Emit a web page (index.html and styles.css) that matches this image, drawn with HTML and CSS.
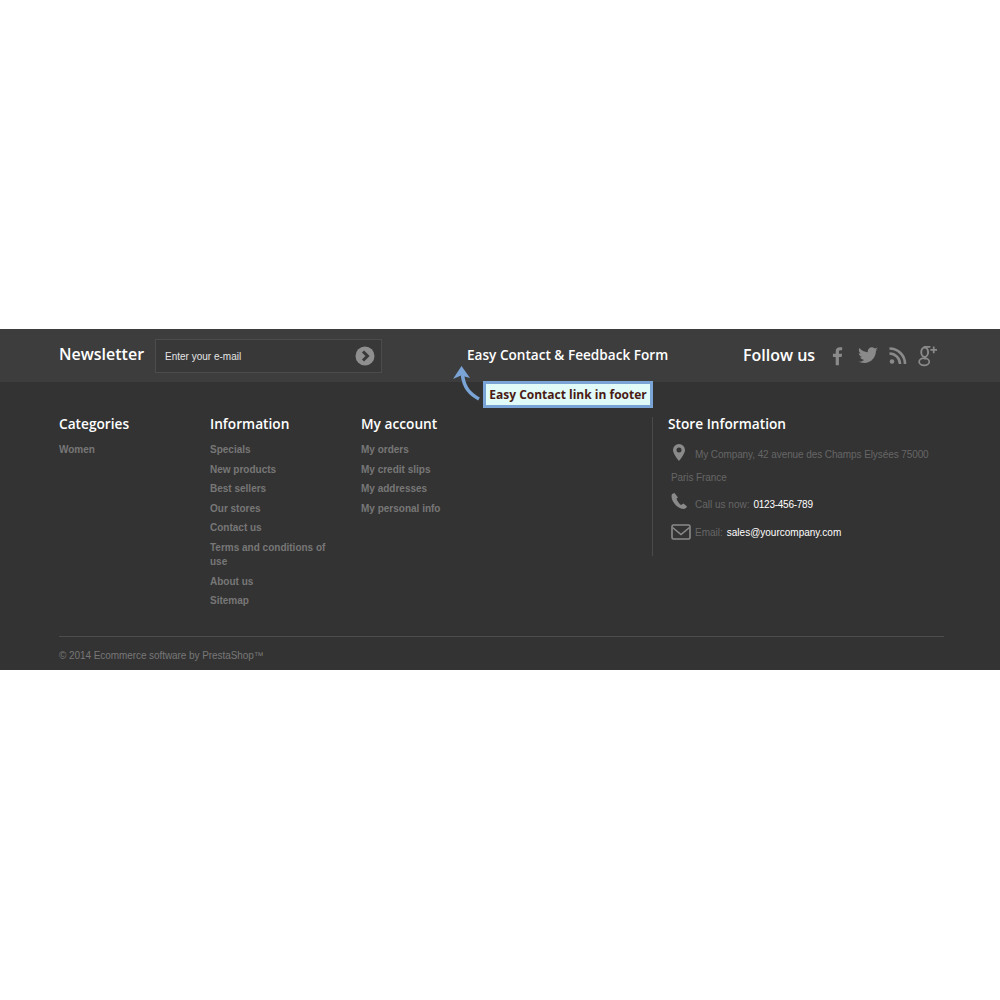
FILE: index.html
```html
<!DOCTYPE html>
<html lang="en">
<head>
    <meta charset="UTF-8">
    <title>Easy Contact link in footer</title>
    <link rel="stylesheet" href="styles.css">
</head>
<body>
    <footer class="footer">
        <div class="top-bar">
            <div class="newsletter">
                <h4 class="newsletter-title">Newsletter</h4>
                <div class="newsletter-box">
                    <span class="newsletter-text">Enter your e-mail</span>
                    <svg class="newsletter-go" width="20" height="20" viewBox="0 0 20 20">
                        <circle cx="10" cy="10" r="9.5" fill="#8f8f8f"/>
                        <path d="M8 5.500 12.500 10 8 14.500" fill="none" stroke="#3a3a3a" stroke-width="3"/>
                    </svg>
                </div>
            </div>
            <a class="easy-link">Easy Contact &amp; Feedback Form</a>
            <div class="follow">
                <h4 class="follow-title">Follow us</h4>
                <div class="follow-icons">
                    <svg class="icon-facebook" width="12" height="20" viewBox="0 0 13 20"><path fill="#8a8a8a" d="M4 20V11H1V7.500h3V5c0-3 1.800-4.500 4.400-4.500 1.200 0 2.200.1 2.600.1v3.200H9.200C7.800 3.800 7.500 4.500 7.500 5.500v2h3.400l-.5 3.500H7.500v9z"/></svg>
                    <svg width="20" height="17" viewBox="0 0 24 20"><path fill="#8a8a8a" d="M24 2.400c-.9.400-1.800.7-2.800.8 1-.6 1.800-1.600 2.200-2.700-1 .6-2 1-3.100 1.200C19.300.7 18 0 16.600 0c-2.700 0-4.900 2.200-4.900 4.900 0 .4 0 .8.100 1.100C7.700 5.800 4.100 3.900 1.700.9c-.4.700-.7 1.600-.7 2.500 0 1.700.9 3.200 2.200 4.100-.8 0-1.600-.2-2.200-.6v.1c0 2.400 1.700 4.400 3.900 4.800-.4.100-.8.200-1.300.2-.3 0-.6 0-.9-.1.600 2 2.400 3.400 4.600 3.400-1.700 1.300-3.800 2.100-6.100 2.100-.4 0-.8 0-1.200-.1C2.200 18.300 4.800 19 7.500 19c9.100 0 14-7.500 14-14v-.6c1-.7 1.800-1.500 2.500-2z"/></svg>
                    <svg width="18" height="17" viewBox="0 0 17 17"><circle cx="2.500" cy="14.500" r="2.300" fill="#8a8a8a"/><path fill="none" stroke="#8a8a8a" stroke-width="2.600" d="M0 6.500A10.500 10.500 0 0 1 10.500 17M0 1.500A15.500 15.500 0 0 1 15.500 17"/></svg>
                    <svg width="20" height="22" viewBox="0 0 21 22"><g fill="none" stroke="#8a8a8a"><ellipse cx="7" cy="7" rx="3.600" ry="5" stroke-width="2"/><ellipse cx="6.500" cy="17" rx="5.300" ry="3.800" stroke-width="1.800"/><path stroke-width="1.800" d="M6 1.500h7M8 12c-2 1-1 2 0 2.500M16.500 1v7M13 4.500h7"/></g></svg>
                </div>
            </div>
        </div>

        <div class="columns">
            <section class="links-col">
                <h4 class="col-title">Categories</h4>
                <ul class="links">
                    <li>Women</li>
                </ul>
            </section>
            <section class="links-col">
                <h4 class="col-title">Information</h4>
                <ul class="links">
                    <li>Specials</li>
                    <li>New products</li>
                    <li>Best sellers</li>
                    <li>Our stores</li>
                    <li>Contact us</li>
                    <li>Terms and conditions of use</li>
                    <li>About us</li>
                    <li>Sitemap</li>
                </ul>
            </section>
            <section class="links-col account-col">
                <h4 class="col-title">My account</h4>
                <ul class="links">
                    <li>My orders</li>
                    <li>My credit slips</li>
                    <li>My addresses</li>
                    <li>My personal info</li>
                </ul>
            </section>
            <section class="store-col">
                <h4 class="col-title">Store Information</h4>
                <div class="store-address">
                    <svg class="store-icon" width="12" height="17" viewBox="0 0 12 17"><path fill="#8a8a8a" fill-rule="evenodd" d="M6 0a6 6 0 0 1 6 6c0 3-3.500 8-6 11C3.500 14 0 9 0 6a6 6 0 0 1 6-6zm0 3.500a2.500 2.500 0 1 0 0 5 2.500 2.500 0 0 0 0-5z"/></svg>
                    <p class="store-line">My Company, 42 avenue des Champs Elysées 75000 Paris France</p>
                </div>
                <div class="store-row store-phone">
                    <svg class="phone-icon" width="16" height="16" viewBox="0 0 16 16"><path fill="#8a8a8a" d="M3.500 0 1 1C0 3 .5 6.500 3 10s6 6 9.500 6c1.500 0 3-1 3.500-2.500l-3.500-3-2.500 1.500C8.500 11 6 8 5.500 5.500L7 4.500z"/></svg>
                    <span class="store-label">Call us now:</span>
                    <span class="store-value phone-value">0123-456-789</span>
                </div>
                <div class="store-row">
                    <svg class="mail-icon" width="20" height="16" viewBox="0 0 20 16"><rect x="1" y="1" width="18" height="14" rx="1.500" fill="none" stroke="#8a8a8a" stroke-width="1.600"/><path d="M1.500 3.500 10 10.500l8.500-7" fill="none" stroke="#8a8a8a" stroke-width="1.600"/></svg>
                    <span class="store-label">Email:</span>
                    <span class="store-value">sales@yourcompany.com</span>
                </div>
            </section>
        </div>

        <div class="copyright">© 2014 Ecommerce software by PrestaShop™</div>

        <svg class="callout-arrow" width="28" height="36" viewBox="0 0 28 36">
            <path d="M26 33C17 28 11 22 9.500 9" fill="none" stroke="#7ba4d6" stroke-width="3.500"/>
            <path d="M8.500 0 0 13 8 9.500 17 12z" fill="#7ba4d6"/>
        </svg>
        <div class="callout">Easy Contact link in footer</div>
    </footer>
</body>
</html>
```

FILE: styles.css
```css
body {
    margin: 0;
    background-color: #fff;
    font-family: "Liberation Sans", Arial, sans-serif;
    padding-top: 329px;
    padding-bottom: 330px;
}

h4 {
    margin: 0;
    font-family: "Open Sans", sans-serif;
    font-weight: 600;
    color: #fff;
}

.footer {
    position: relative;
    height: 341px;
    background-color: #333;
}

.top-bar {
    display: flex;
    align-items: center;
    height: 53px;
    padding: 0 56px 0 59px;
    background-color: #3d3d3d;
}

.newsletter {
    display: flex;
    align-items: center;
    width: 408px;
}

.newsletter-title {
    font-size: 16px;
    width: 96px;
    margin-top: -4px;
}

.newsletter-box {
    display: flex;
    align-items: center;
    justify-content: space-between;
    box-sizing: border-box;
    width: 227px;
    height: 34px;
    margin-top: 1px;
    padding: 0 6px 0 9px;
    border: 1px solid #4c4c4c;
    background-color: #383838;
}

.newsletter-text {
    font-size: 10px;
    color: #e4e4e4;
}

.easy-link {
    font-family: "Open Sans", sans-serif;
    font-weight: 600;
    font-size: 13.6px;
    color: #fff;
    width: 276px;
    margin-top: -2px;
}

.follow {
    display: flex;
    align-items: center;
}

.follow-title {
    font-size: 16px;
    width: 89px;
    margin-top: -2px;
}

.follow-icons {
    display: flex;
    align-items: center;
    gap: 11px;
}

.icon-facebook {
    margin-right: 3px;
}

.columns {
    display: flex;
    padding: 32px 56px 0 59px;
    height: 254px;
    box-sizing: border-box;
}

.links-col {
    width: 151px;
}

.account-col {
    width: 291px;
}

.col-title {
    font-size: 13.7px;
    line-height: 20px;
    margin-bottom: 9px;
}

.links {
    list-style: none;
    margin: 0;
    padding: 0;
    width: 125px;
    font-size: 10px;
    font-weight: bold;
    line-height: 14px;
    color: #777;
}

.links li {
    padding-bottom: 5.6px;
}

.store-col {
    box-sizing: border-box;
    width: 291px;
    height: 139px;
    padding-left: 15px;
    border-left: 1px solid #4a4a4a;
    margin-top: 3px;
}

.store-col .col-title {
    margin-top: -3px;
}

.store-address {
    padding-left: 3px;
    font-size: 10px;
    letter-spacing: -0.09px;
    line-height: 23px;
    color: #666;
}

.store-icon {
    float: left;
    margin: 1px 10px 0 2px;
}

.store-line {
    margin: 0;
    width: 270px;
}

.store-row {
    display: flex;
    align-items: center;
    gap: 4px;
    height: 28px;
    padding-left: 3px;
    font-size: 10px;
}

.store-phone {
    margin-top: 1px;
}

.phone-icon {
    margin: -6px 4px 0 0;
}

.mail-icon {
    margin: 0;
}

.store-label {
    color: #666;
}

.store-value {
    color: #fff;
}

.phone-value {
    letter-spacing: -0.25px;
}

.copyright {
    margin: 0 56px 0 59px;
    height: 34px;
    border-top: 1px solid #4d4d4d;
    box-sizing: border-box;
    padding-top: 13px;
    font-size: 10px;
    letter-spacing: -0.07px;
    color: #777;
}

.callout-arrow {
    position: absolute;
    left: 453px;
    top: 37px;
}

.callout {
    position: absolute;
    left: 483px;
    top: 52px;
    box-sizing: border-box;
    width: 170px;
    height: 27px;
    border: 3px solid #7ba4d6;
    background-color: #e0fbf8;
    font-family: "Open Sans", sans-serif;
    font-weight: 700;
    font-size: 12px;
    line-height: 21px;
    text-align: center;
    color: #4a1a14;
}
```
